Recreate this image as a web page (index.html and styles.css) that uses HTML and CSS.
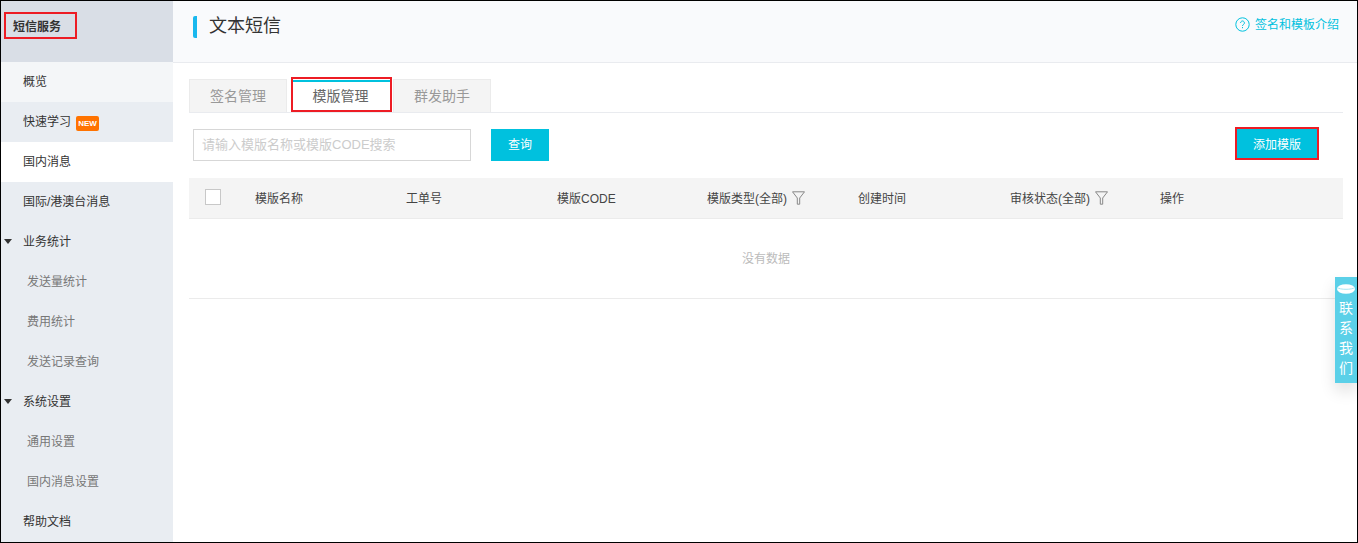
FILE: index.html
```html
<!DOCTYPE html>
<html lang="zh">
<head>
<meta charset="utf-8">
<title>文本短信</title>
<link rel="stylesheet" href="styles.css">
</head>
<body>
<div class="frame">
  <aside class="sidebar">
    <div class="side-head"><span class="side-title">短信服务</span></div>
    <a class="item light">概览</a>
    <a class="item">快速学习<span class="new">NEW</span></a>
    <a class="item current">国内消息</a>
    <a class="item">国际/港澳台消息</a>
    <a class="item"><i class="caret"></i>业务统计</a>
    <a class="item sub">发送量统计</a>
    <a class="item sub">费用统计</a>
    <a class="item sub">发送记录查询</a>
    <a class="item"><i class="caret"></i>系统设置</a>
    <a class="item sub">通用设置</a>
    <a class="item sub">国内消息设置</a>
    <a class="item">帮助文档</a>
  </aside>
  <main class="main">
    <header class="top">
      <h1 class="title">文本短信</h1>
      <a class="intro">
        <svg class="help" viewBox="0 0 15 15" width="15" height="15"><circle cx="7.5" cy="7.5" r="6.7" fill="none" stroke="#00c1de" stroke-width="1"/><path d="M5.6 5.9a1.9 1.9 0 1 1 2.9 1.6c-.7.4-1 .8-1 1.5" fill="none" stroke="#00c1de" stroke-width="1"/><rect x="7" y="10" width="1" height="1.2" fill="#00c1de"/></svg>
        签名和模板介绍
      </a>
    </header>
    <div class="content">
      <nav class="tabs">
        <a class="tab">签名管理</a>
        <a class="tab active">模版管理</a>
        <a class="tab">群发助手</a>
      </nav>
      <div class="toolbar">
        <input class="search" placeholder="请输入模版名称或模版CODE搜索">
        <button class="btn query">查询</button>
        <button class="btn add">添加模版</button>
      </div>
      <div class="thead">
        <span class="check-cell"><i class="check"></i></span>
        <span>模版名称</span>
        <span>工单号</span>
        <span>模版CODE</span>
        <span>模版类型(全部)<svg class="funnel" viewBox="0 0 13 14" width="13" height="14"><path d="M.5.8h12L7.7 7v6.2H5.3V7z" fill="none" stroke="#888" stroke-width="1"/></svg></span>
        <span>创建时间</span>
        <span>审核状态(全部)<svg class="funnel" viewBox="0 0 13 14" width="13" height="14"><path d="M.5.8h12L7.7 7v6.2H5.3V7z" fill="none" stroke="#888" stroke-width="1"/></svg></span>
        <span>操作</span>
      </div>
      <div class="empty">没有数据</div>
    </div>
    <aside class="contact">
      <svg viewBox="0 0 18 10" width="18" height="10"><ellipse cx="9" cy="5" rx="9" ry="4.8" fill="#fff"/><path d="M0 3.5c3 2.4 15 2.4 18 0" fill="none" stroke="#a8e6f2" stroke-width="1"/></svg>
      <span>联</span><span>系</span><span>我</span><span>们</span>
    </aside>
  </main>
</div>
</body>
</html>
```
FILE: styles.css
```css
* { box-sizing: border-box; }
html, body { margin: 0; padding: 0; background: #fff; }
body { font-family: "Liberation Sans", "Noto Sans CJK SC", sans-serif; font-size: 12px; color: #333; }
.frame { position: relative; width: 1358px; height: 543px; border: 1px solid #000; display: flex; overflow: hidden; }

.sidebar { width: 172px; flex: none; background: #e9edf2; display: flex; flex-direction: column; }
.side-head { height: 61px; background: #d9dee6; padding: 11px 0 0 3px; flex: none; }
.side-title { display: block; width: 73px; height: 27px; border: 2px solid #ed1c24; padding-left: 7px; line-height: 26px; font-weight: 700; color: #333; }
.item { position: relative; height: 40px; line-height: 40px; padding-left: 22px; color: #333; flex: none; display: block; }
.item.light { background: #f4f6f8; }
.item.current { background: #fff; }
.item.sub { padding-left: 26px; color: #777; }
.caret { position: absolute; left: 3px; top: 17px; width: 0; height: 0; border-left: 4px solid transparent; border-right: 4px solid transparent; border-top: 5px solid #333; }
.new { display: inline-block; margin-left: 5px; width: 23px; height: 15px; vertical-align: 0; text-align: center; background: #ff7300; border-radius: 2px; color: #fff; font: 700 8px/15px "Liberation Sans", sans-serif; }

.main { position: relative; flex: 1; min-width: 0; }
.top { height: 62px; background: #f9fafc; border-bottom: 1px solid #e9ebef; display: flex; align-items: center; justify-content: space-between; padding: 0 18px 0 20px; }
.title { margin: 0; font-size: 18px; font-weight: 400; line-height: 20px; height: 22px; border-left: 4px solid #1ab8ee; border-radius: 2px 0 0 2px; padding-left: 12px; color: #333; position: relative; top: -5px; }
.intro { color: #00c1de; font-size: 12px; line-height: 14px; display: flex; align-items: center; gap: 5px; position: relative; top: -7px; }

.content { padding: 16px 14px 0 16px; }
.tabs { display: flex; height: 34px; border-bottom: 1px solid #e9ebef; align-items: flex-end; }
.tab { width: 98px; height: 33px; background: #f4f4f4; border: 1px solid #ebebeb; border-bottom: none; font-size: 14px; color: #999; line-height: 33px; text-align: center; }
.tab.active { width: 101px; height: 35px; margin: 0 1px 0 4px; padding-right: 2px; background: #fff; border: 2px solid #ed1c24; color: #666; line-height: 35px; box-shadow: inset 0 1px 0 #fff, inset 0 3px 0 #00c1de; }

.toolbar { display: flex; align-items: flex-start; padding: 16px 0 0 4px; height: 65px; }
.search { width: 278px; height: 32px; border: 1px solid #d7d7d7; background: #fff; padding: 0 8px 2px; font: 13px "Liberation Sans", "Noto Sans CJK SC", sans-serif; outline: none; }
.search::placeholder { color: #ccc; }
.btn { height: 32px; border: 0; background: #00c1de; color: #fff; font: 12px "Liberation Sans", "Noto Sans CJK SC", sans-serif; padding: 0; }
.query { width: 58px; margin-left: 20px; padding-bottom: 3px; }
.add { width: 84px; height: 33px; margin-left: auto; margin-top: -2px; margin-right: 24px; border: 2px solid #ed1c24; }

.thead { display: grid; grid-template-columns: 66px 151px 151px 150px 151px 152px 150px 1fr; height: 41px; background: #f4f4f4; border-bottom: 1px solid #ebebeb; align-items: center; color: #444; line-height: 16px; }
.thead > span { position: relative; top: 1px; }
.thead > .check-cell { top: -1px; }
.check-cell { padding-left: 16px; display: flex; }
.check { width: 16px; height: 16px; background: #fff; border: 1px solid #c8c8c8; }
.funnel { margin-left: 5px; vertical-align: -3px; position: relative; top: -1px; }
.empty { height: 80px; border-bottom: 1px solid #ebebeb; color: #bbb; text-align: center; line-height: 81px; }

.contact { position: absolute; right: 0; top: 276px; width: 22px; height: 106px; background: #5bd0e8; color: #fff; font-size: 14px; display: flex; flex-direction: column; align-items: center; padding-top: 7px; box-shadow: 0 8px 16px rgba(0,0,0,.12); }
.contact svg { flex: none; margin-bottom: 4px; }
.contact span { height: 20px; line-height: 20px; }
```
